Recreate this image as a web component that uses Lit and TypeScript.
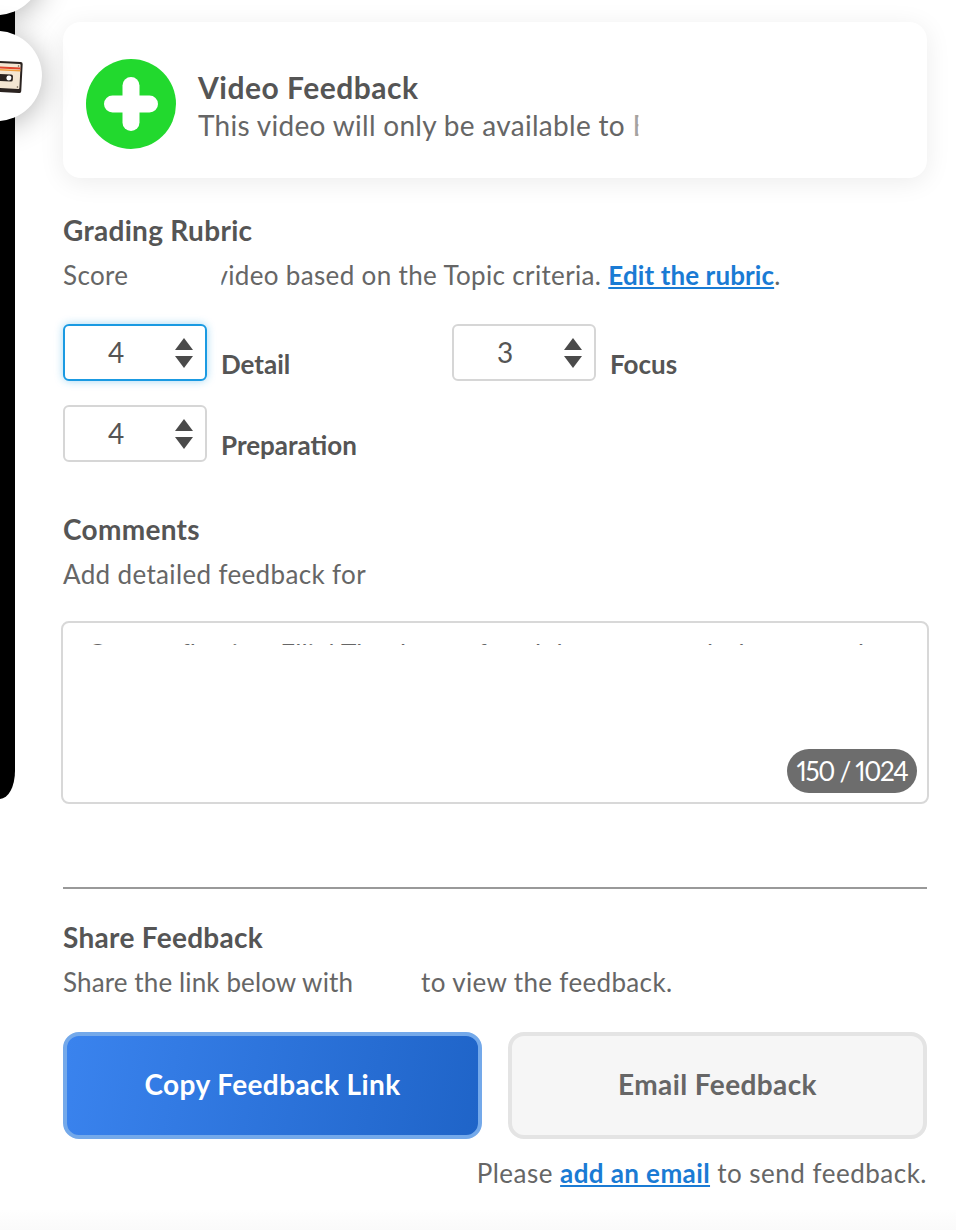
import { LitElement, css, html } from 'lit';
import { customElement } from 'lit/decorators.js';

const SCORES = [
  { label: 'Detail', value: 4, focused: true },
  { label: 'Focus', value: 3, focused: false },
  { label: 'Preparation', value: 4, focused: false },
];

@customElement('app-root')
export class AppRoot extends LitElement {
  private cassette() {
    return html`
      <svg class="cassette" viewBox="0 0 46 33" width="46" height="33">
        <g transform="rotate(3 23 16)">
          <rect x="1" y="1" width="44" height="31" rx="2" fill="#2b2320" />
          <rect x="3" y="3" width="40" height="25" rx="1" fill="#f4e6d2" />
          <rect x="3" y="6.5" width="40" height="2" fill="#e0452c" />
          <rect x="3" y="9" width="40" height="1.5" fill="#f0a040" />
          <rect x="12" y="14" width="24" height="7" rx="2" fill="#2b2320" />
          <circle cx="32" cy="17.5" r="2.5" fill="#fff" />
          <circle cx="41" cy="5" r="0.8" fill="#6b5a4a" />
          <circle cx="41" cy="26" r="0.8" fill="#6b5a4a" />
        </g>
      </svg>
    `;
  }

  render() {
    return html`
      <aside>
        <div class="bubble top"></div>
        <div class="bubble second">${this.cassette()}</div>
      </aside>
      <main>
        <section class="card">
          <svg class="plus" viewBox="0 0 90 90" width="90" height="90">
            <circle cx="45" cy="45" r="45" fill="#22d92e" />
            <rect x="18" y="36.5" width="54" height="17" rx="8.5" fill="#fff" />
            <rect x="36.5" y="18" width="17" height="54" rx="8.5" fill="#fff" />
          </svg>
          <div class="card-text">
            <div class="card-title">Video Feedback</div>
            <div class="card-sub">
              This video will only be available to <span class="sliver">Ellie</span>
            </div>
          </div>
        </section>

        <h3 class="rubric">Grading Rubric</h3>
        <p>
          Score <span class="name-gap"></span><span class="cut-v">video</span> based on the Topic
          criteria. <a href="#">Edit the rubric</a>.
        </p>

        <div class="scores">
          ${SCORES.map(
            (s) => html`
              <div class="score">
                <div class="stepper ${s.focused ? 'focused' : ''}">
                  <span class="value">${s.value}</span>
                  <svg viewBox="0 0 18 30" width="18" height="30">
                    <path d="M9 0 18 12H0Z" fill="#4a4a4a" />
                    <path d="M0 18H18L9 30Z" fill="#4a4a4a" />
                  </svg>
                </div>
                <label>${s.label}</label>
              </div>
            `
          )}
        </div>

        <h3 class="comments">Comments</h3>
        <p>Add detailed feedback for</p>

        <div class="textarea">
          <div class="clipped-line">
            Great reflection, Ellie! The demo of cool data on your desk was much more
          </div>
          <span class="counter">150 / 1024</span>
        </div>

        <hr />

        <h3 class="share">Share Feedback</h3>
        <p>
          <span class="tight">Share the link below with</span>
          <span class="share-gap"></span> to view the feedback.
        </p>

        <div class="actions">
          <button type="button" class="primary">Copy Feedback Link</button>
          <button type="button" class="secondary">Email Feedback</button>
        </div>
        <div class="note">Please <a href="#">add an email</a> to send feedback.</div>
        <div class="foot"></div>
      </main>
    `;
  }

  static styles = css`
    :host {
      display: flex;
      align-items: flex-start;
      height: 1230px;
      overflow: hidden;
      background: #fff;
      font-family: 'Lato', 'Open Sans', sans-serif;
      font-size: 26px;
      letter-spacing: 0.35px;
      color: #666;
    }

    aside {
      position: relative;
      flex: none;
      width: 15px;
      height: 799px;
      background: #000;
      border-bottom-right-radius: 15px 28px;
    }

    .bubble {
      position: absolute;
      left: -48px;
      width: 90px;
      height: 90px;
      border-radius: 50%;
      background: #fff;
      box-shadow: 0 4px 30px rgba(0, 0, 0, 0.3);
    }

    .bubble.top {
      top: -75px;
    }

    .bubble.second {
      top: 31px;
    }

    .cassette {
      position: absolute;
      left: 25px;
      top: 29px;
    }

    main {
      flex: none;
      width: 864px;
      margin-left: 48px;
      padding-top: 22px;
    }

    .card {
      display: flex;
      align-items: center;
      gap: 22px;
      height: 156px;
      padding: 8px 0 0 23px;
      box-sizing: border-box;
      border-radius: 18px;
      background: #fff;
      box-shadow: 0 4px 26px rgba(0, 0, 0, 0.08);
    }

    .plus {
      flex: none;
    }

    .card-text {
      margin-top: 4px;
    }

    .card-title {
      font-size: 30px;
      font-weight: 700;
      letter-spacing: 0.5px;
      line-height: 38px;
      color: #555;
    }

    .card-sub {
      font-size: 28px;
      letter-spacing: 0.3px;
      line-height: 38px;
      color: #666;
    }

    .sliver {
      display: inline-block;
      opacity: 0.6;
      clip-path: inset(0 calc(100% - 6px) 0 0);
    }

    h3 {
      margin: 0;
      font-size: 28px;
      font-weight: 700;
      letter-spacing: 0.3px;
      line-height: 34px;
      color: #555;
    }

    h3.rubric {
      margin-top: 35px;
    }

    h3.comments {
      margin-top: 50px;
    }

    h3.share {
      margin-top: 31px;
    }

    p {
      margin: 11px 0 0;
      line-height: 34px;
      white-space: nowrap;
    }

    a {
      color: #1a7bd4;
      font-weight: 700;
      letter-spacing: 0.1px;
    }

    .name-gap {
      display: inline-block;
      width: 79px;
    }

    .cut-v {
      display: inline-block;
      clip-path: inset(0 0 0 7px);
    }

    .tight {
      letter-spacing: 0.12px;
    }

    .share-gap {
      display: inline-block;
      width: 54px;
    }

    .scores {
      display: grid;
      grid-template-columns: 389px 1fr;
      row-gap: 24px;
      margin-top: 32px;
    }

    .score {
      display: flex;
      align-items: flex-end;
      gap: 14px;
    }

    .stepper {
      display: flex;
      align-items: center;
      justify-content: space-between;
      box-sizing: border-box;
      width: 144px;
      height: 57px;
      padding: 0 12px 0 43px;
      border: 2px solid #d6d6d6;
      border-radius: 6px;
      background: #fff;
      font-size: 28px;
      color: #555;
    }

    .stepper .value {
      margin-top: -2px;
    }

    .stepper.focused {
      border-color: #1a9ae2;
      box-shadow: 0 0 8px rgba(26, 154, 226, 0.4);
    }

    label {
      font-size: 26px;
      font-weight: 700;
      letter-spacing: 0;
      line-height: 34px;
      color: #555;
    }

    .textarea {
      position: relative;
      box-sizing: border-box;
      height: 183px;
      margin: 30px -2px 0;
      padding: 14px 24px 0;
      border: 2px solid #d8d8d8;
      border-radius: 8px;
      background: #fff;
    }

    .clipped-line {
      white-space: nowrap;
      overflow: hidden;
      letter-spacing: 0.1px;
      line-height: 34px;
      clip-path: inset(0 0 26px 0);
    }

    .counter {
      position: absolute;
      right: 10px;
      bottom: 9px;
      width: 130px;
      height: 44px;
      border-radius: 22px;
      background: #6d6d6d;
      color: #fff;
      font-size: 26px;
      font-variant-numeric: proportional-nums;
      letter-spacing: -1.3px;
      word-spacing: 0;
      line-height: 44px;
      text-align: center;
    }

    hr {
      height: 2px;
      margin: 83px 0 0;
      border: 0;
      background: #999;
    }

    .actions {
      display: grid;
      grid-template-columns: 419px 419px;
      gap: 26px;
      margin-top: 33px;
    }

    button {
      height: 107px;
      padding: 0 0 3px;
      border-radius: 16px;
      border: 4px solid;
      font: 700 28px 'Lato', sans-serif;
      letter-spacing: 0.4px;
    }

    .primary {
      border-color: #74a9ea;
      background: linear-gradient(100deg, #3a83ee, #1f64c8);
      color: #fff;
    }

    .secondary {
      border-color: #e4e4e4;
      background: #f6f6f6;
      color: #666;
    }

    .note {
      margin-top: 17px;
      letter-spacing: 0.5px;
      line-height: 34px;
      text-align: right;
    }

    .note a {
      letter-spacing: 0.4px;
    }

    .foot {
      height: 20px;
      margin: 20px -29px 0 -63px;
      background: linear-gradient(#fefefe, #fafafa);
    }
  `;
}
